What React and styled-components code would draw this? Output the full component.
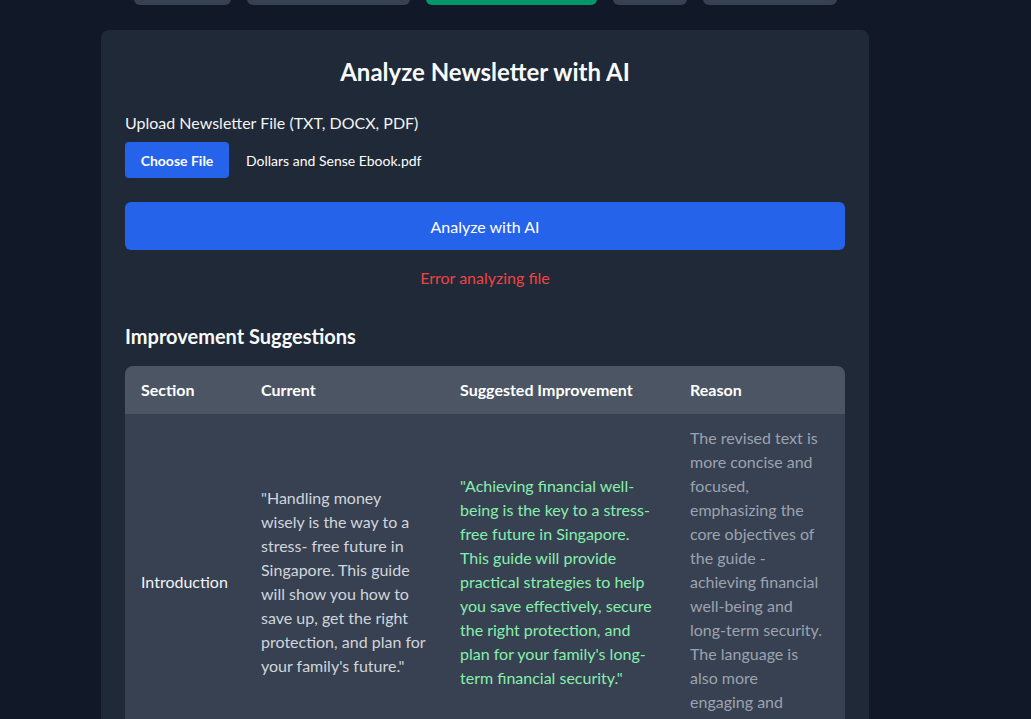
import React from 'react'
import styled, { createGlobalStyle } from 'styled-components'

const GlobalStyle = createGlobalStyle`
  html, body {
    margin: 0;
    padding: 0;
    background-color: #111827;
    font-family: Lato, "Open Sans", sans-serif;
    color: #f3f4f6;
    overflow: hidden;
  }
`

const Page = styled.div`
  width: 768px;
  margin-left: 101px;
  display: flex;
  flex-direction: column;
`

const Tabs = styled.div`
  display: flex;
  justify-content: center;
  gap: 16px;
  margin-top: -35px;
  margin-bottom: 25px;
`

const Tab = styled.div`
  width: ${p => p.$w}px;
  height: 40px;
  border-radius: 6px;
  background-color: ${p => (p.$active ? '#059669' : '#374151')};
`

const Card = styled.div`
  background-color: #1f2937;
  border-radius: 8px;
  padding: 24px 24px 40px;
  min-height: 800px;
`

const Title = styled.h2`
  margin: 0 0 21px;
  text-align: center;
  font-size: 24px;
  font-weight: 700;
  line-height: 36px;
  color: #f9fafb;
`

const Label = styled.div`
  font-size: 16px;
  line-height: 24px;
  margin-bottom: 7px;
  color: #f3f4f6;
`

const FileRow = styled.div`
  display: flex;
  align-items: center;
  gap: 17px;
  margin-bottom: 24px;
`

const FileButton = styled.button`
  height: 36px;
  width: 104px;
  border: none;
  border-radius: 4px;
  background-color: #2563eb;
  color: #fff;
  font-family: inherit;
  font-size: 14px;
  font-weight: 700;
`

const FileName = styled.span`
  font-size: 14px;
  color: #fff;
`

const AnalyzeButton = styled.button`
  width: 100%;
  height: 48px;
  border: none;
  border-radius: 6px;
  background-color: #2563eb;
  color: #fff;
  font-family: inherit;
  font-size: 16px;
`

const ErrorText = styled.p`
  margin: 16px 0 0;
  text-align: center;
  color: #ef4444;
  font-size: 16px;
  line-height: 24px;
`

const SectionTitle = styled.h3`
  margin: 31px 0 15px;
  font-size: 20px;
  font-weight: 700;
  line-height: 30px;
  color: #f9fafb;
`

const Table = styled.table`
  width: 100%;
  border-collapse: separate;
  border-spacing: 0;
  table-layout: fixed;
  border-radius: 8px;
  overflow: hidden;
`

const Th = styled.th`
  background-color: #4b5563;
  color: #fff;
  text-align: left;
  font-size: 16px;
  font-weight: 700;
  padding: 12px 16px;
  line-height: 24px;
`

const Td = styled.td`
  background-color: #374151;
  color: ${p => p.$color || '#f3f4f6'};
  padding: 12px 16px;
  font-size: 16px;
  line-height: 24px;
  vertical-align: middle;
`

const rows = [
  {
    section: 'Introduction',
    current:
      '"Handling money wisely is the way to a stress- free future in Singapore. This guide will show you how to save up, get the right protection, and plan for your family\'s future."',
    suggested:
      '"Achieving financial well-being is the key to a stress-free future in Singapore. This guide will provide practical strategies to help you save effectively, secure the right protection, and plan for your family\'s long-term financial security."',
    reason:
      'The revised text is more concise and focused, emphasizing the core objectives of the guide - achieving financial well-being and long-term security. The language is also more engaging\u00a0and motivating.',
  },
]

export default function App() {
  return (
    <>
      <GlobalStyle />
      <Page>
        <Tabs>
          <Tab $w={97} />
          <Tab $w={163} />
          <Tab $w={171} $active />
          <Tab $w={74} />
          <Tab $w={134} />
        </Tabs>
        <Card>
          <Title>Analyze Newsletter with AI</Title>
          <Label>Upload Newsletter File (TXT, DOCX, PDF)</Label>
          <FileRow>
            <FileButton>Choose File</FileButton>
            <FileName>Dollars and Sense Ebook.pdf</FileName>
          </FileRow>
          <AnalyzeButton>Analyze with AI</AnalyzeButton>
          <ErrorText>Error analyzing file</ErrorText>
          <SectionTitle>Improvement Suggestions</SectionTitle>
          <Table>
            <colgroup>
              <col style={{ width: 120 }} />
              <col style={{ width: 199 }} />
              <col style={{ width: 230 }} />
              <col style={{ width: 171 }} />
            </colgroup>
            <thead>
              <tr>
                <Th>Section</Th>
                <Th>Current</Th>
                <Th>Suggested Improvement</Th>
                <Th>Reason</Th>
              </tr>
            </thead>
            <tbody>
              {rows.map(r => (
                <tr key={r.section}>
                  <Td>{r.section}</Td>
                  <Td $color="#d1d5db">{r.current}</Td>
                  <Td $color="#86efac">{r.suggested}</Td>
                  <Td $color="#9ca3af">{r.reason}</Td>
                </tr>
              ))}
            </tbody>
          </Table>
        </Card>
      </Page>
    </>
  )
}
